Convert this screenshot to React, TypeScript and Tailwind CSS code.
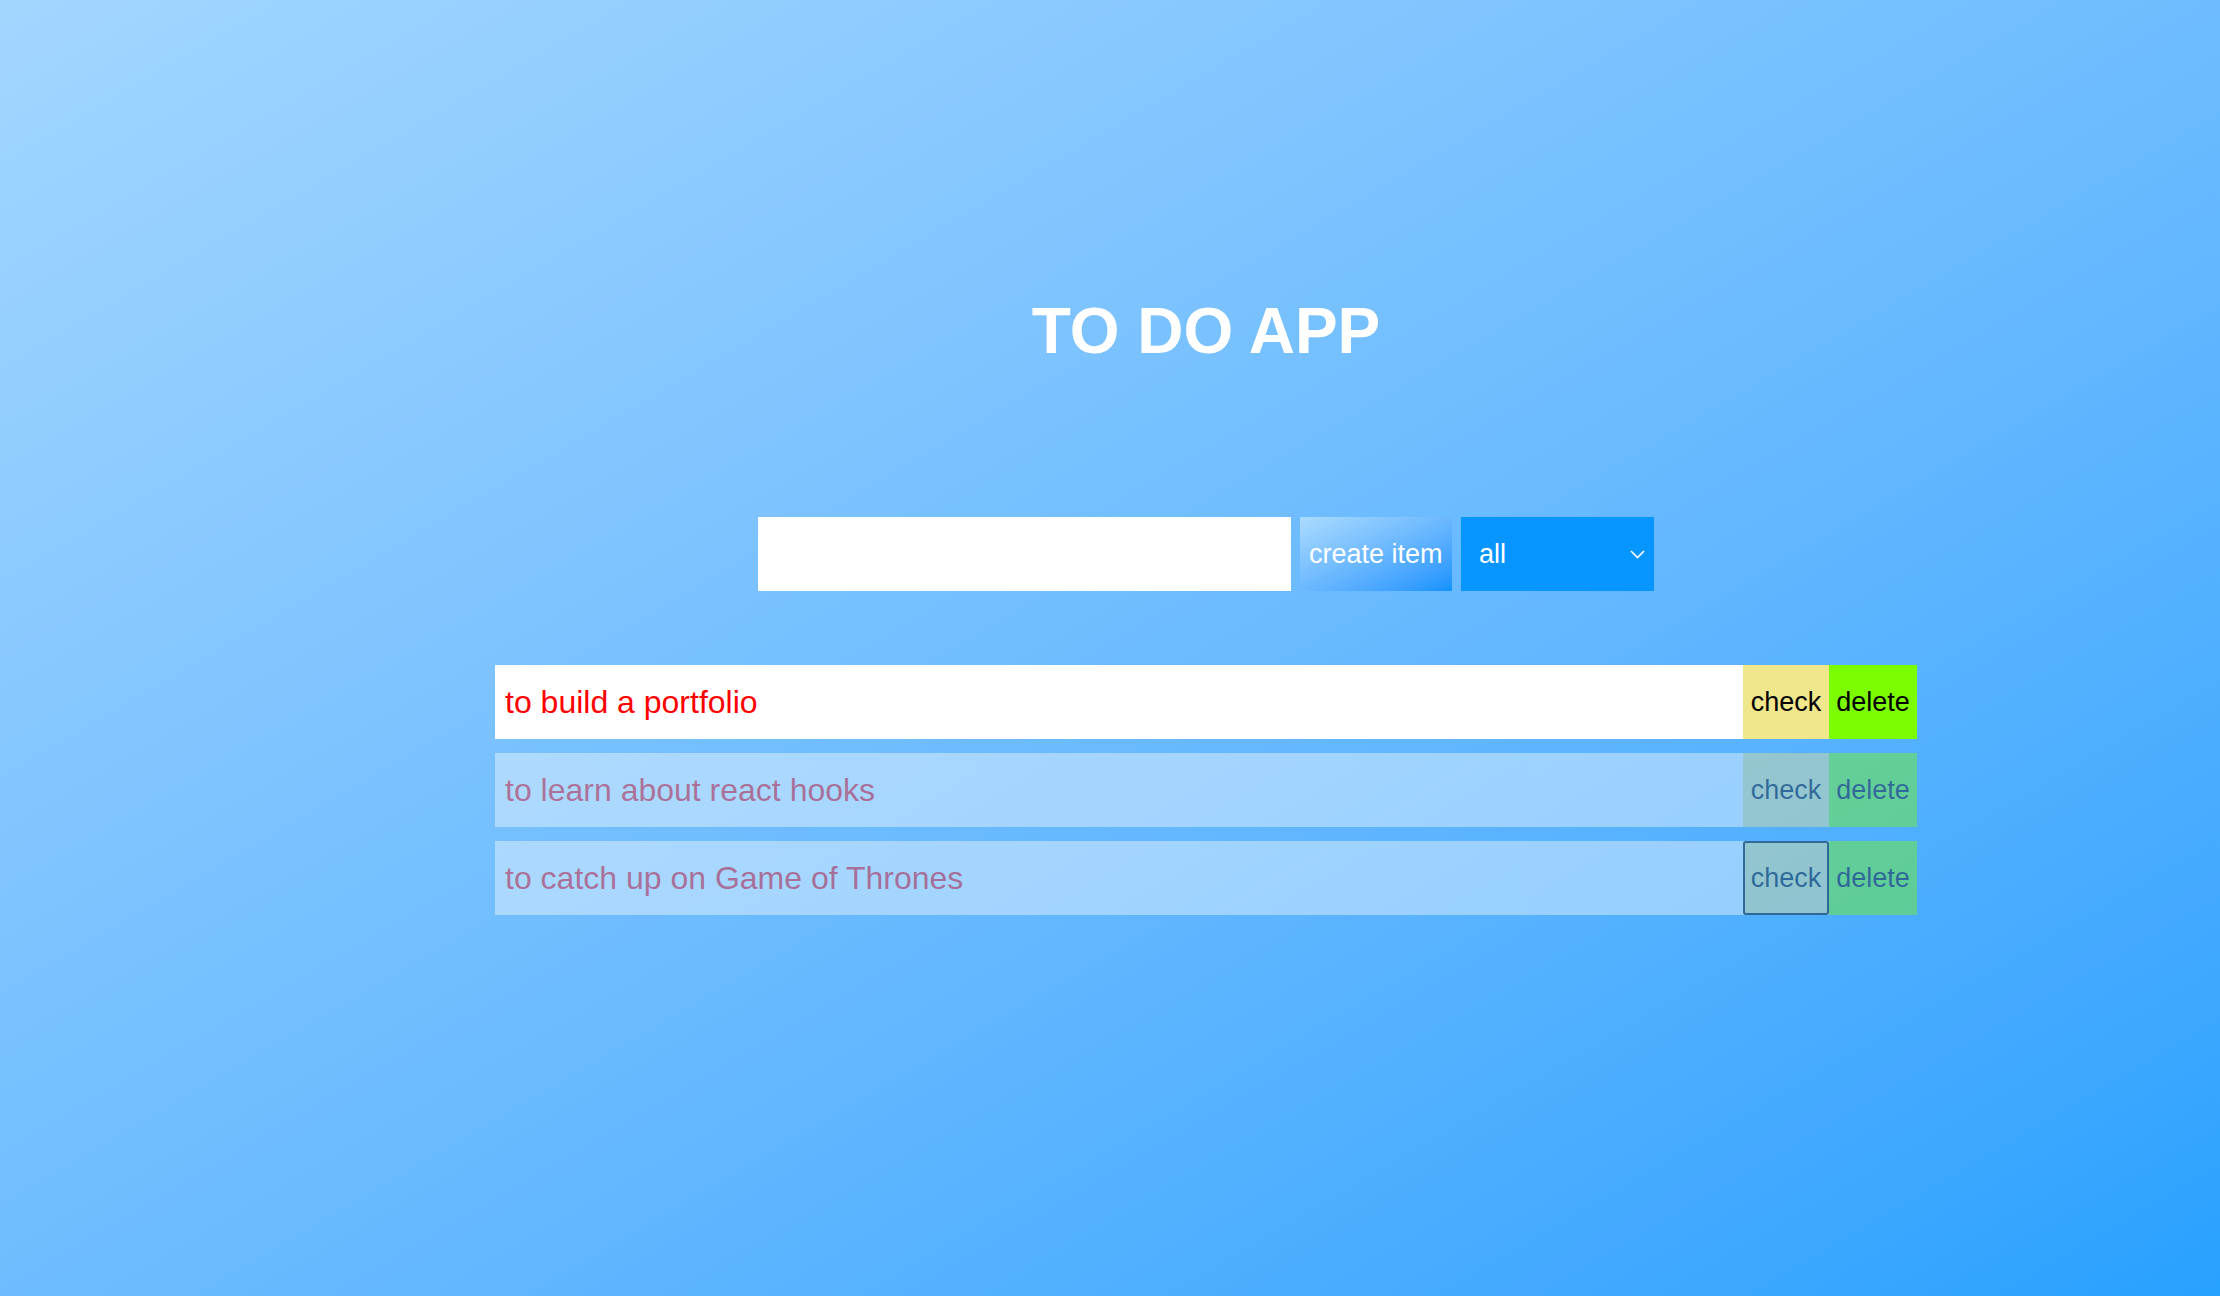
import { useState } from "react";

type Todo = {
    id: number;
    text: string;
    done: boolean;
};

const initialTodos: Todo[] = [
    { id: 1, text: "to build a portfolio", done: false },
    { id: 2, text: "to learn about react hooks", done: true },
    { id: 3, text: "to catch up on Game of Thrones", done: true },
];

function TodoRow({ todo, focused }: { todo: Todo; focused?: boolean }) {
    return (
        <div className={"flex h-[74px] w-full bg-white " + (todo.done ? "opacity-40" : "")}>
            <div className="flex flex-1 items-center pl-[10px] text-[32px] text-[#ff0000]">{todo.text}</div>
            <button
                className={
                    "flex w-[86px] items-center justify-center bg-[#f0e68c] text-[27px] text-black " +
                    (focused ? "rounded-[3px] outline-2 -outline-offset-2 outline-black" : "")
                }
            >
                check
            </button>
            <button className="flex w-[88px] items-center justify-center bg-[#7cfc00] text-[27px] text-black">
                delete
            </button>
        </div>
    );
}

export default function App() {
    const [text, setText] = useState("");
    const [filter, setFilter] = useState("all");

    return (
        <div
            className="flex min-h-screen w-full flex-col items-center bg-linear-to-br from-[#a3d6ff] to-[#27a1ff] pl-[192px]"
            style={{ fontFamily: '"Liberation Sans", Arial, sans-serif' }}
        >
            <h1 className="mt-[299px] text-[64px] leading-none font-bold text-white">TO DO APP</h1>

            {/* Form */}
            <div className="mt-[154px] flex h-[74px] gap-[9px]">
                <input
                    value={text}
                    onChange={(e) => setText(e.target.value)}
                    className="h-full w-[533px] border-0 bg-white px-3 text-[27px] outline-none"
                />
                <button className="h-full w-[152px] bg-linear-to-br from-[#abdbff] to-[#0a92ff] pl-[9px] text-left text-[27px] text-white">
                    create item
                </button>
                <div className="relative h-full w-[193px]">
                    <select
                        value={filter}
                        onChange={(e) => setFilter(e.target.value)}
                        className="h-full w-full appearance-none border-0 bg-[#0796ff] pl-[18px] text-[27px] text-white outline-none"
                    >
                        <option value="all">all</option>
                        <option value="completed">completed</option>
                        <option value="uncompleted">uncompleted</option>
                    </select>
                    <svg
                        className="pointer-events-none absolute top-[33px] right-[9px]"
                        width="15"
                        height="9"
                        viewBox="0 0 15 9"
                        fill="none"
                    >
                        <path d="M1 1l6.5 6.5L14 1" stroke="white" strokeWidth="1.6" />
                    </svg>
                </div>
            </div>

            {/* List */}
            <div className="mt-[74px] flex w-[1422px] flex-col gap-[14px]">
                {initialTodos.map((t) => (
                    <TodoRow key={t.id} todo={t} focused={t.id === 3} />
                ))}
            </div>
        </div>
    );
}
